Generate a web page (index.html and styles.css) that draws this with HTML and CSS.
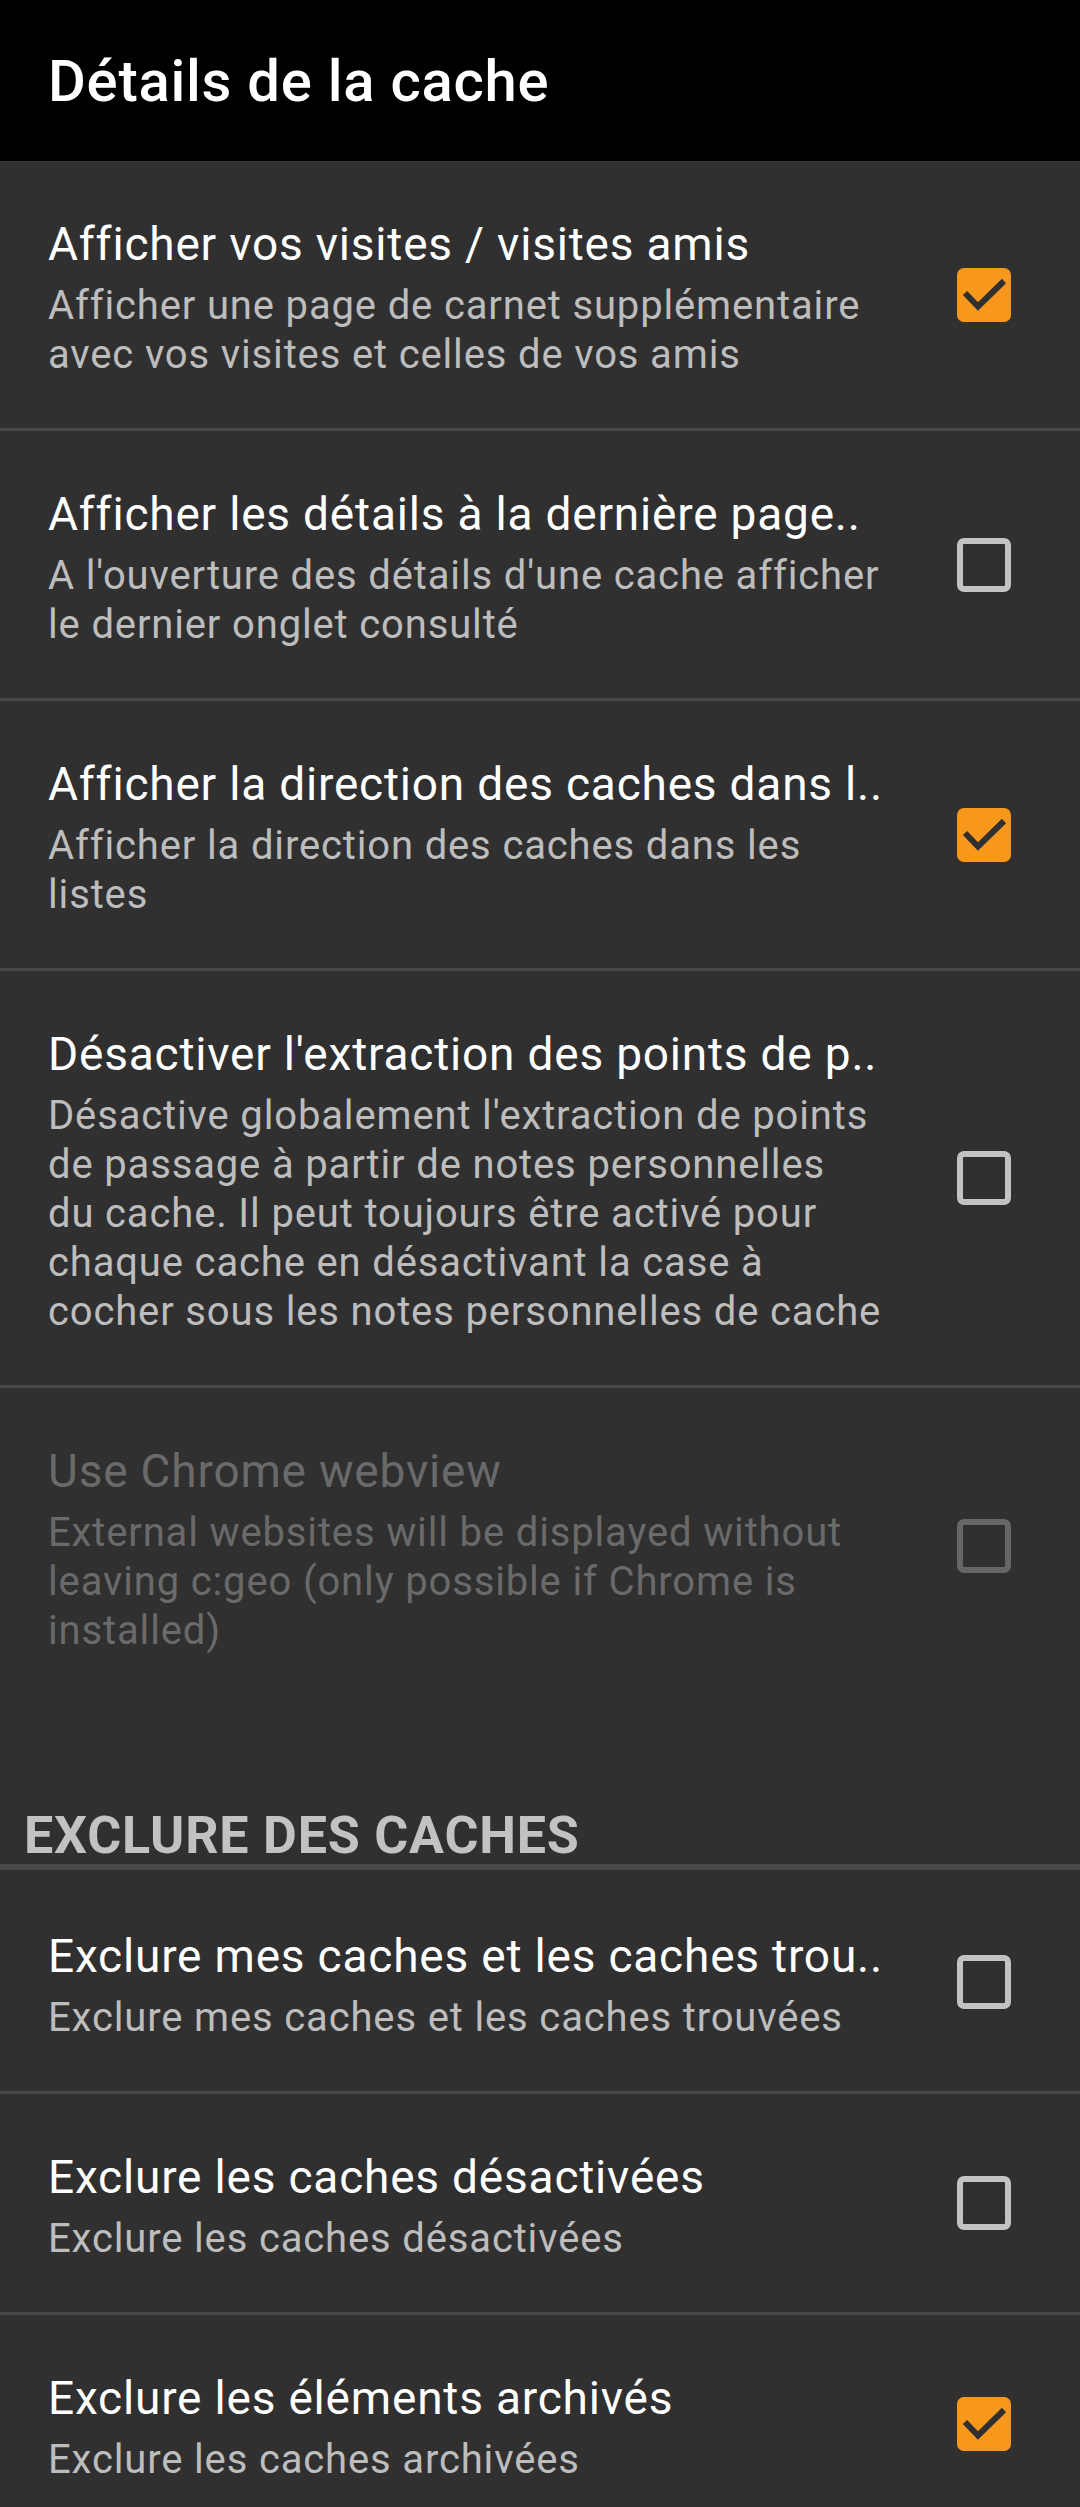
FILE: index.html
```html
<!DOCTYPE html>
<html lang="fr">
<head>
<meta charset="utf-8">
<title>Détails de la cache</title>
<link rel="stylesheet" href="styles.css">
</head>
<body>
<header class="toolbar">
  <h1 class="toolbar-title">Détails de la cache</h1>
</header>

<main class="prefs">
  <div class="pref">
    <div class="pref-text">
      <div class="pref-title">Afficher vos visites / visites amis</div>
      <div class="pref-summary">Afficher une page de carnet supplémentaire<br>avec vos visites et celles de vos amis</div>
    </div>
    <span class="cb cb-on"><svg viewBox="0 0 54 54" width="54" height="54"><polyline points="8,25 21,38.5 47,13" /></svg></span>
  </div>

  <div class="pref">
    <div class="pref-text">
      <div class="pref-title">Afficher les détails à la dernière page..</div>
      <div class="pref-summary">A l'ouverture des détails d'une cache afficher<br>le dernier onglet consulté</div>
    </div>
    <span class="cb"></span>
  </div>

  <div class="pref">
    <div class="pref-text">
      <div class="pref-title">Afficher la direction des caches dans l..</div>
      <div class="pref-summary">Afficher la direction des caches dans les<br>listes</div>
    </div>
    <span class="cb cb-on"><svg viewBox="0 0 54 54" width="54" height="54"><polyline points="8,25 21,38.5 47,13" /></svg></span>
  </div>

  <div class="pref">
    <div class="pref-text">
      <div class="pref-title">Désactiver l'extraction des points de p..</div>
      <div class="pref-summary">Désactive globalement l'extraction de points<br>de passage à partir de notes personnelles<br>du cache. Il peut toujours être activé pour<br>chaque cache en désactivant la case à<br>cocher sous les notes personnelles de cache</div>
    </div>
    <span class="cb"></span>
  </div>

  <div class="pref pref-disabled pref-last">
    <div class="pref-text">
      <div class="pref-title">Use Chrome webview</div>
      <div class="pref-summary">External websites will be displayed without<br>leaving c:geo (only possible if Chrome is<br>installed)</div>
    </div>
    <span class="cb"></span>
  </div>

  <h2 class="category">EXCLURE DES CACHES</h2>

  <div class="pref">
    <div class="pref-text">
      <div class="pref-title">Exclure mes caches et les caches trou..</div>
      <div class="pref-summary">Exclure mes caches et les caches trouvées</div>
    </div>
    <span class="cb"></span>
  </div>

  <div class="pref">
    <div class="pref-text">
      <div class="pref-title">Exclure les caches désactivées</div>
      <div class="pref-summary">Exclure les caches désactivées</div>
    </div>
    <span class="cb"></span>
  </div>

  <div class="pref">
    <div class="pref-text">
      <div class="pref-title">Exclure les éléments archivés</div>
      <div class="pref-summary">Exclure les caches archivées</div>
    </div>
    <span class="cb cb-on"><svg viewBox="0 0 54 54" width="54" height="54"><polyline points="8,25 21,38.5 47,13" /></svg></span>
  </div>
</main>
</body>
</html>
```

FILE: styles.css
```css
* {
  box-sizing: border-box;
}

html, body {
  margin: 0;
  padding: 0;
}

body {
  background: #303030;
  font-family: Roboto, "Noto Sans", "Liberation Sans", sans-serif;
  color: #ffffff;
  min-height: 2507px;
}

.toolbar {
  height: 161px;
  background: #000000;
  display: flex;
  align-items: center;
  padding: 0 48px;
}

.toolbar-title {
  margin: 0;
  font-size: 58px;
  line-height: 68px;
  font-weight: 500;
  letter-spacing: 0.75px;
  color: #ffffff;
}

.prefs {
  display: flex;
  flex-direction: column;
}

.pref {
  display: flex;
  align-items: center;
  padding: 0 69px 0 48px;
  border-bottom: 3px solid #484848;
}

.pref-last {
  border-bottom: none;
}

.pref-text {
  flex: 1;
  min-width: 0;
  padding: 56px 0 49px 0;
}

.pref-title {
  font-size: 46px;
  line-height: 54px;
  letter-spacing: 0.8px;
  color: #ffffff;
  white-space: nowrap;
  overflow: hidden;
}

.pref-summary {
  margin-top: 10px;
  font-size: 40px;
  line-height: 49px;
  letter-spacing: 0.85px;
  color: #bdbdbd;
}

.pref-disabled .pref-title,
.pref-disabled .pref-summary {
  color: #6a6a6a;
}

.cb {
  flex: none;
  width: 54px;
  height: 54px;
  margin-left: 30px;
  border: 6px solid #c2c2c2;
  border-radius: 7px;
  display: block;
}

.pref-disabled .cb {
  border-color: #666666;
}

.cb-on {
  border: none;
  background: #f7981d;
}

.cb-on svg {
  display: block;
}

.cb-on polyline {
  fill: none;
  stroke: #303030;
  stroke-width: 6;
  stroke-linejoin: miter;
  stroke-linecap: butt;
}

.category {
  margin: 0 0 3px 0;
  padding: 106px 24px 2px 24px;
  font-size: 52px;
  line-height: 52px;
  font-weight: 700;
  letter-spacing: 0.8px;
  color: #c2c2c2;
  border-bottom: 6px solid #484848;
}
```
